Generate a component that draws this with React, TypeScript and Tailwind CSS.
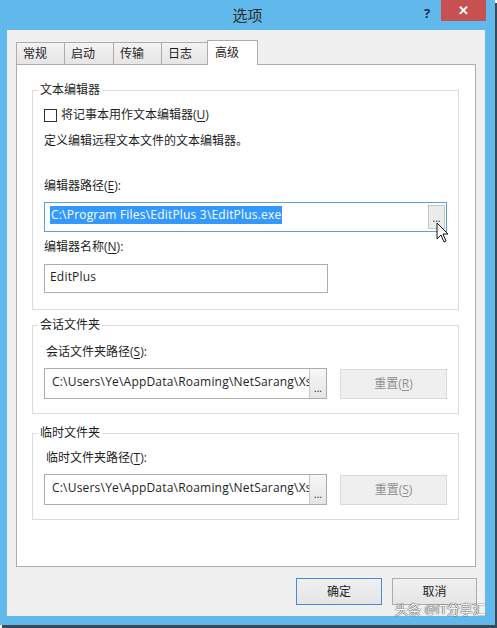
import type { ReactNode } from "react";

const tabs = [
  { label: "常规", w: "w-[48px]" },
  { label: "启动", w: "w-[49px]" },
  { label: "传输", w: "w-[48px]" },
  { label: "日志", w: "w-[46px]" },
];

function Key({ k }: { k: string }) {
  return (
    <>
      (<span className="underline underline-offset-2">{k}</span>)
    </>
  );
}

function Group({
  title,
  className,
  children,
}: {
  title: string;
  className: string;
  children: ReactNode;
}) {
  return (
    <div className={`relative ml-[15px] w-[427px] border border-[#dcdcdc] ${className}`}>
      <span className="absolute -top-[9px] left-[5px] bg-white px-[2px] leading-[16px] text-[#1e1e1e]">
        {title}
      </span>
      {children}
    </div>
  );
}

function BrowseButton({ hover }: { hover?: boolean }) {
  return (
    <div
      className={`flex w-[17px] shrink-0 items-end justify-center pb-[5px] text-[10px] leading-none text-[#222] ${
        hover
          ? "my-[2px] mr-[1px] border border-[#c6c6c6] bg-[#ececec]"
          : "border-l border-[#c8c8c8] bg-gradient-to-b from-[#f6f6f6] to-[#e6e6e6]"
      }`}
    >
      ...
    </div>
  );
}

function PathRow({ value, reset }: { value: string; reset: string }) {
  return (
    <div className="mt-[8px] flex items-start pl-[11px]">
      <div className="flex h-[31px] w-[283px] border border-[#acacac] bg-white">
        <div className="min-w-0 flex-1 overflow-hidden whitespace-nowrap pl-[7px] pt-[5px] leading-[16px] tracking-[0.2px] text-[#1e1e1e]">
          {value}
        </div>
        <BrowseButton />
      </div>
      <div className="ml-[13px] mt-px flex h-[30px] w-[107px] items-center justify-center border border-[#d9d9d9] bg-[#efefef] text-[#8f8f8f]">
        重置
        <Key k={reset} />
      </div>
    </div>
  );
}

export default function App() {
  return (
    <div className="relative h-[628px] w-[497px] bg-white font-['Open_Sans','Noto_Sans_CJK_SC',sans-serif] text-[12px]">
      <div className="flex h-[625px] w-[495px] flex-col bg-[#60b9ea] shadow-[2px_3px_0_#3d4852]">
        {/* title bar */}
        <div className="relative flex h-[30px] items-center justify-center">
          <span className="pt-[1px] text-[15px] text-[#2b2b2b]">选项</span>
          <span className="absolute left-[424px] top-[4px] text-[13px] font-bold text-[#1d2b52]">?</span>
          <div className="absolute left-[441px] top-0 flex h-[21px] w-[45px] items-center justify-center bg-[#c75050] text-[13px] font-bold text-white">
            ✕
          </div>
        </div>

        {/* client */}
        <div className="ml-[7px] flex h-[586px] w-[478px] flex-col bg-[#f0f0f0] pt-[10px]">
          <div className="flex h-[24px] items-end pl-[9px]">
            {tabs.map((t) => (
              <div
                key={t.label}
                className={`${t.w} flex h-[22px] items-center border border-r-0 border-b-0 border-[#acacac] bg-gradient-to-b from-[#f2f2f2] to-[#e6e6e6] pl-[6px] text-[#1e1e1e]`}
              >
                {t.label}
              </div>
            ))}
            <div className="relative z-10 -mb-px flex h-[25px] w-[51px] items-center border border-b-0 border-[#acacac] bg-white pl-[7px] text-[#1e1e1e]">
              高级
            </div>
          </div>

          <div className="ml-[9px] flex h-[503px] w-[460px] flex-col border border-[#acacac] bg-white pt-[25px]">
            <Group title="文本编辑器" className="h-[220px]">
              <div className="mt-[16px] flex h-[16px] items-center pl-[11px]">
                <div className="h-[13px] w-[13px] border border-[#333] bg-white" />
                <span className="ml-[4px] text-[#1e1e1e]">
                  将记事本用作文本编辑器
                  <Key k="U" />
                </span>
              </div>
              <div className="mt-[10px] h-[16px] pl-[11px] leading-[16px] text-[#1e1e1e]">
                定义编辑远程文本文件的文本编辑器。
              </div>
              <div className="mt-[29px] h-[16px] pl-[11px] leading-[16px] text-[#1e1e1e]">
                编辑器路径
                <Key k="E" />:
              </div>
              <div className="ml-[11px] mt-[8px] flex h-[30px] w-[403px] border border-[#5e9fda] bg-white">
                <div className="flex-1 pl-[5px] pt-[3px]">
                  <span className="inline-block bg-[#3399ff] px-px leading-[18px] tracking-[0.2px] text-white">
                    C:\Program Files\EditPlus 3\EditPlus.exe
                  </span>
                </div>
                <BrowseButton hover />
              </div>
              <div className="mt-[7px] h-[16px] pl-[11px] leading-[16px] text-[#1e1e1e]">
                编辑器名称
                <Key k="N" />:
              </div>
              <div className="ml-[11px] mt-[9px] h-[29px] w-[284px] border border-[#acacac] bg-white pl-[5px] pt-[4px] leading-[16px] tracking-[0.2px] text-[#1e1e1e]">
                EditPlus
              </div>
            </Group>

            <Group title="会话文件夹" className="mt-[15px] h-[89px]">
              <div className="mt-[18px] h-[16px] pl-[13px] leading-[16px] text-[#1e1e1e]">
                会话文件夹路径
                <Key k="S" />:
              </div>
              <PathRow value="C:\Users\Ye\AppData\Roaming\NetSarang\Xshell" reset="R" />
            </Group>

            <Group title="临时文件夹" className="mt-[19px] h-[87px]">
              <div className="mt-[16px] h-[16px] pl-[13px] leading-[16px] text-[#1e1e1e]">
                临时文件夹路径
                <Key k="T" />:
              </div>
              <PathRow value="C:\Users\Ye\AppData\Roaming\NetSarang\Xshell" reset="S" />
            </Group>
          </div>

          <div className="mt-[11px] flex justify-end gap-[10px] pr-[8px]">
            <div className="flex h-[27px] w-[86px] items-center justify-center border border-[#3d8ee0] bg-gradient-to-b from-[#f0f0f0] to-[#e5e5e5] text-[#1e1e1e]">
              确定
            </div>
            <div className="flex h-[27px] w-[85px] items-center justify-center border border-[#acacac] bg-gradient-to-b from-[#f0f0f0] to-[#e5e5e5] text-[#1e1e1e]">
              取消
            </div>
          </div>
        </div>
      </div>

      {/* mouse cursor */}
      <svg className="absolute left-[436px] top-[222px]" width="14" height="22" viewBox="0 0 14 22">
        <path
          d="M1 1 L1 17 L5 13 L8 20 L10 19 L7 12 L12 12 Z"
          fill="white"
          stroke="#111"
          strokeWidth="1"
          strokeLinejoin="round"
        />
      </svg>

      {/* watermark */}
      <span className="absolute left-[395px] top-[601px] whitespace-nowrap text-[13px] leading-[16px] text-white [text-shadow:0_0_1px_#222,0_0_1px_#222]">
        头条 @IT分享汇
      </span>
    </div>
  );
}
